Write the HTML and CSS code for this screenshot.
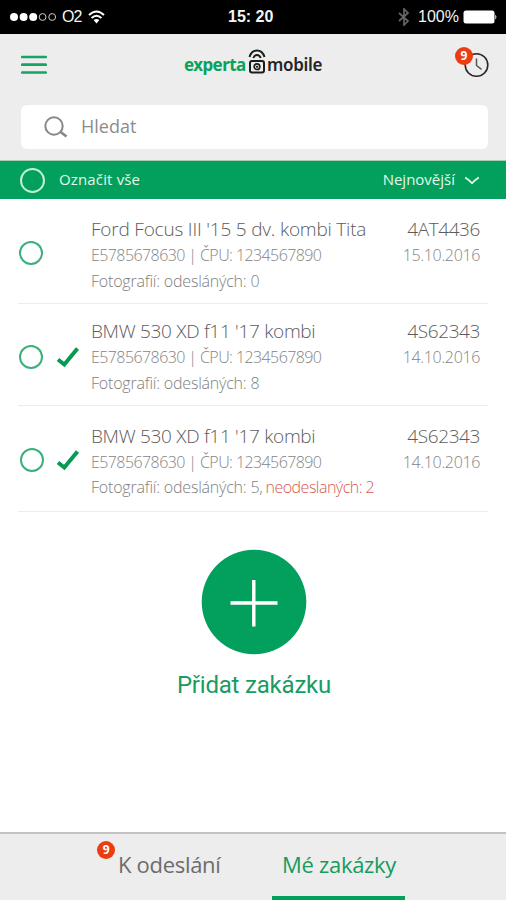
FILE: index.html
```html
<!DOCTYPE html>
<html lang="cs">
<head>
<meta charset="utf-8">
<title>experta mobile</title>
<link rel="stylesheet" href="styles.css">
</head>
<body>
<div class="status">
  <svg class="signal" width="47" height="8" viewBox="0 0 47 8"><g fill="#fff"><circle cx="4" cy="4" r="4"/><circle cx="13.6" cy="4" r="4"/><circle cx="23.2" cy="4" r="4"/></g><g fill="none" stroke="#ccc" stroke-width="1"><circle cx="32.6" cy="4" r="3.4"/><circle cx="42.2" cy="4" r="3.4"/></g></svg>
  <span class="carrier">O2</span>
  <svg class="wifi" width="17" height="14" viewBox="0 0 17 14"><g fill="none" stroke="#fff" stroke-width="2"><path d="M1 5Q8.500 -2 16 5M3.600 8Q8.500 3.500 13.400 8"/></g><path d="M5.600 10Q8.500 7.800 11.400 10L8.500 13.400Z" fill="#fff"/></svg>
  <span class="time">15: 20</span>
  <svg class="bluetooth" width="12" height="18" viewBox="0 0 12 18"><path d="M1 5l9 8-4 4V1l4 4-9 8" fill="none" stroke="#666" stroke-width="1.700"/></svg>
  <span class="percent">100%</span>
  <svg class="battery" width="35" height="14" viewBox="0 0 35 14"><rect x=".5" y=".5" width="31" height="13" rx="2.500" fill="#fff"/><path d="M32.300 4.500q2.200 2.500 0 5z" fill="#fff"/></svg>
</div>
<header class="header">
  <div class="topbar">
    <svg class="menu" width="26" height="20" viewBox="0 0 26 20"><path d="M1.300 2h23.400M1.300 9.700h23.400M1.300 17.500h23.400" stroke="#16a366" stroke-width="2.700" stroke-linecap="round"/></svg>
    <div class="logo">
      <span class="brand">experta</span>
      <svg class="lock" width="18" height="26" viewBox="0 0 18 26"><g fill="none" stroke="#1c1c1c" stroke-width="2"><path d="M1.500 8Q3.500 1.500 9 1.500T16.500 8M5.300 9Q6.500 6 9 6T12.700 9"/><rect x="2" y="12" width="14" height="11.500" rx="2"/><circle cx="9" cy="17.700" r="2.800" stroke-width="1.700"/></g><circle cx="9" cy="17.700" r="1"/></svg>
      <span class="product">mobile</span>
    </div>
    <div class="history">
      <svg width="26" height="26" viewBox="0 0 26 26"><circle cx="12.500" cy="13" r="11.300" fill="none" stroke="#292929" stroke-width="1.600"/><path d="M12.500 6.500v7l5 3.800" fill="none" stroke="#555" stroke-width="1.500"/></svg>
      <span class="badge">9</span>
    </div>
  </div>
  <div class="search">
    <svg width="24" height="22" viewBox="0 0 24 22"><circle cx="10" cy="10" r="8.700" fill="none" stroke="#888" stroke-width="2"/><path d="M16 15.500l6.500 5" stroke="#888" stroke-width="2.700"/></svg>
    <span class="hint">Hledat</span>
  </div>
</header>
<div class="selectbar">
  <span class="ring ring-light"></span>
  <span class="all">Označit vše</span>
  <span class="sort">Nejnovější</span>
  <svg width="16" height="9" viewBox="0 0 16 9"><path d="M1.200 1.500Q5 4 8 7.300Q11 4 14.800 1.500" fill="none" stroke="#e4f8ec" stroke-width="1.700"/></svg>
</div>
<main class="list">
  <article class="row first">
    <div class="marks"><span class="ring"></span></div>
    <div class="info"><div class="title long">Ford Focus III '15 5 dv. kombi Tita</div><div class="sub">E5785678630 | ČPU: 1234567890</div><div class="photos">Fotografií: odesláných: 0</div></div>
    <div class="meta"><div class="code">4AT4436</div><div class="date">15.10.2016</div></div>
  </article>
  <article class="row second">
    <div class="marks"><span class="ring"></span><svg width="24" height="22" viewBox="0 0 24 22"><path d="M2 13.500l6.300 5L21.500 2.500" fill="none" stroke="#079a52" stroke-width="4"/></svg></div>
    <div class="info"><div class="title">BMW 530 XD f11 '17 kombi</div><div class="sub">E5785678630 | ČPU: 1234567890</div><div class="photos">Fotografií: odesláných: 8</div></div>
    <div class="meta"><div class="code">4S62343</div><div class="date">14.10.2016</div></div>
  </article>
  <article class="row third">
    <div class="marks"><span class="ring"></span><svg width="24" height="22" viewBox="0 0 24 22"><path d="M2 13.500l6.300 5L21.500 2.500" fill="none" stroke="#079a52" stroke-width="4"/></svg></div>
    <div class="info"><div class="title">BMW 530 XD f11 '17 kombi</div><div class="sub">E5785678630 | ČPU: 1234567890</div><div class="photos">Fotografií: odesláných: 5, <span class="unsent">neodeslaných: 2</span></div></div>
    <div class="meta"><div class="code">4S62343</div><div class="date">14.10.2016</div></div>
  </article>
</main>
<section class="add">
  <svg width="106" height="106" viewBox="0 0 106 106"><circle cx="53" cy="53" r="52.300" fill="#039f5c"/><path d="M29.500 54h47M52.800 31v46.500" stroke="#fff" stroke-width="3.400"/></svg>
  <span class="add-label">Přidat zakázku</span>
</section>
<nav class="tabs">
  <div class="tab pending"><span class="badge">9</span><span>K odeslání</span></div>
  <div class="tab active"><span>Mé zakázky</span></div>
</nav>
</body>
</html>
```
FILE: styles.css
```css
* { box-sizing: border-box; }
body { margin: 0; width: 506px; height: 900px; display: flex; flex-direction: column; overflow: hidden; background: #fff; font-family: "Open Sans", "Noto Sans", sans-serif; white-space: nowrap; }
svg { display: block; flex: none; }
.status { height: 34px; display: flex; align-items: center; background: #000; color: #f4f4f4; font: 16px/34px "Liberation Sans", sans-serif; padding-left: 10px; }
.carrier { width: 20px; margin-left: 5px; letter-spacing: -1px; }
.wifi { margin-left: 6px; }
.time { width: 48px; margin-left: 123px; font-weight: bold; }
.bluetooth { margin-left: 122px; }
.percent { width: 40px; margin-left: 8px; }
.battery { margin-left: 5px; }
.header { height: 126px; background: #ededed; }
.topbar { height: 71px; display: flex; padding-left: 21px; }
.menu { margin-top: 21px; }
.logo { display: flex; margin: 14px 0 0 137px; width: 140px; font: 600 17px/34px "Noto Sans", sans-serif; color: #252525; }
.brand { width: 62px; color: #09a25d; font-weight: 700; letter-spacing: -.6px; }
.lock { margin: 1px 1px 0 2px; }
.product { letter-spacing: -.3px; }
.history { position: relative; margin: 18px 0 0 140px; }
.badge { position: absolute; width: 18px; height: 18px; border-radius: 50%; background: #ec3c12; color: #fff; font: bold 12px/18px "Noto Sans", sans-serif; text-align: center; }
.history .badge { left: -9px; top: -5px; }
.search { display: flex; width: 467px; height: 44px; margin-left: 21px; padding-left: 23px; align-items: center; background: #fff; border-radius: 6px; }
.hint { margin: -2px 0 0 13px; color: #8c8c8c; font-size: 18px; }
.selectbar { height: 39px; display: flex; align-items: center; padding: 0 26px 0 20px; border-top: 1px solid #a7cdb8; background: #039f5c; color: #e4f8ec; font-size: 15px; }
.ring { width: 24px; height: 24px; border: 2px solid #3bb07c; border-radius: 50%; flex: none; }
.ring-light { width: 25px; height: 25px; border: 2px solid #c3efd9; }
.all { margin: -2px 0 0 14px; letter-spacing: .15px; }
.sort { margin: -2px 9px 0 auto; }
.row { display: flex; margin: 0 18px; border-bottom: 1px solid #ececec; }
.first { height: 105px; padding-top: 17px; }
.second { height: 102px; padding-top: 14px; }
.third { height: 106px; padding-top: 17px; }
.marks { width: 73px; height: 74px; display: flex; align-items: center; padding-left: 1px; gap: 13px; }
.second .marks { height: 78px; }
.third .marks { padding-left: 2px; gap: 12px; }
.info { flex: 1; font-weight: 300; }
.title, .code { font-size: 19px; line-height: 27px; color: #5c5c5c; font-weight: 300; letter-spacing: -.3px; }
.long { letter-spacing: -.2px; }
.code { letter-spacing: -.4px; }
.sub, .date { font-size: 16px; line-height: 25px; font-weight: 300; color: #848484; letter-spacing: -.58px; }
.date { letter-spacing: -.35px; }
.photos { font-size: 16px; line-height: 27px; color: #7e7e7e; letter-spacing: -.2px; }
.third .photos { line-height: 25px; }
.meta { text-align: right; padding-right: 8px; }
.unsent { margin-left: -1px; color: #d75c50; letter-spacing: -.52px; }
.add { display: flex; flex-direction: column; align-items: center; margin-top: 37px; padding-left: 2px; }
.add-label { margin-top: 13px; font: 24px/34px Roboto, sans-serif; letter-spacing: -.2px; color: #199c61; }
.tabs { display: flex; height: 68px; margin-top: auto; border-top: 2px solid #c2c2c2; background: #ededed; font-size: 22px; line-height: 60px; letter-spacing: -.3px; color: #6c6c6c; }
.tab { position: relative; height: 66px; }
.pending { width: 103px; margin-left: 118px; }
.pending .badge { left: -21px; top: 7px; }
.active { width: 133px; margin-left: 51px; padding-left: 10px; border-bottom: 4px solid #039f5c; color: #159b60; }
```
